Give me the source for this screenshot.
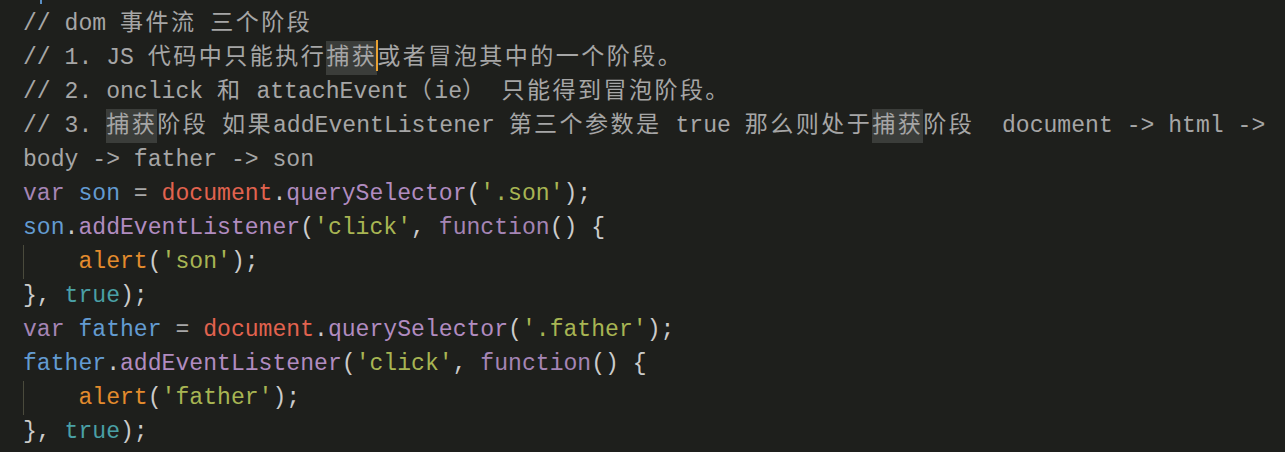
import React from "react";

type Tok = [string, string];

const C = "text-[#a6a6a6]";
const KW = "text-[#a585b5]";
const ID = "text-[#639bd1]";
const P = "text-[#cbcbcb]";
const OP = "text-[#a8a8a8]";
const DOC = "text-[#e2634f]";
const M = "text-[#b18cc0]";
const S = "text-[#a8b553]";
const AL = "text-[#e38b2d]";
const TR = "text-[#4aa0a6]";
const HL = "hl";
const CUR = "cur";

const lines: Tok[][] = [
  [[C, "// dom 事件流 三个阶段"]],
  [[C, "// 1. JS 代码中只能执行"], [HL, "捕获"], [CUR, ""], [C, "或者冒泡其中的一个阶段。"]],
  [[C, "// 2. onclick 和 attachEvent（ie） 只能得到冒泡阶段。"]],
  [
    [C, "// 3. "],
    [HL, "捕获"],
    [C, "阶段 如果addEventListener 第三个参数是 true 那么则处于"],
    [HL, "捕获"],
    [C, "阶段  document -> html ->"],
  ],
  [[C, "body -> father -> son"]],
  [[KW, "var"], [P, " "], [ID, "son"], [OP, " = "], [DOC, "document"], [P, "."], [M, "querySelector"], [P, "("], [S, "'.son'"], [P, ");"]],
  [[ID, "son"], [P, "."], [M, "addEventListener"], [P, "("], [S, "'click'"], [P, ", "], [KW, "function"], [P, "() {"]],
  [[P, "    "], [AL, "alert"], [P, "("], [S, "'son'"], [P, ");"]],
  [[P, "}, "], [TR, "true"], [P, ");"]],
  [[KW, "var"], [P, " "], [ID, "father"], [OP, " = "], [DOC, "document"], [P, "."], [M, "querySelector"], [P, "("], [S, "'.father'"], [P, ");"]],
  [[ID, "father"], [P, "."], [M, "addEventListener"], [P, "("], [S, "'click'"], [P, ", "], [KW, "function"], [P, "() {"]],
  [[P, "    "], [AL, "alert"], [P, "("], [S, "'father'"], [P, ");"]],
  [[P, "}, "], [TR, "true"], [P, ");"]],
];

const CJK = /([\u3000-\u303f\u4e00-\u9fff\uff00-\uffef]+)/;

function Runs({ text }: { text: string }) {
  const parts = text.split(CJK);
  return (
    <>
      {parts.map((p, i) =>
        i % 2 === 1 ? (
          <span key={i} className="tracking-[2.4px]">
            {p}
          </span>
        ) : (
          <span key={i}>{p}</span>
        )
      )}
    </>
  );
}

function Line({ toks, guide }: { toks: Tok[]; guide: boolean }) {
  return (
    <div className="relative h-[34px] leading-[34px] whitespace-pre">
      {guide && <span className="absolute left-0 top-0 h-[34px] w-[1px] bg-[#4a4a3c]" />}
      {toks.map(([cls, text], i) => {
        if (cls === CUR)
          return (
            <span
              key={i}
              className="inline-block w-[2px] h-[31px] -ml-[1px] -mr-[1px] bg-[#e9a132] align-middle relative -top-[2px]"
            />
          );
        if (cls === HL)
          return (
            <span key={i} className="bg-[#3b3d3a] text-[#a6a6a6] py-[4px]">
              <Runs text={text} />
            </span>
          );
        return (
          <span key={i} className={cls}>
            <Runs text={text} />
          </span>
        );
      })}
    </div>
  );
}

export default function App() {
  return (
    <div
      className="w-[1285px] h-[452px] bg-[#1e1f1c] overflow-hidden relative text-[23.1px]"
      style={{ fontFamily: '"Liberation Mono", "Noto Sans CJK SC", monospace' }}
    >
      <span className="absolute left-[40px] top-0 w-[2px] h-[4px] bg-[#5a8fc4]" />
      <div className="pt-[7px] pl-[23px]">
        {lines.map((l, i) => (
          <Line key={i} toks={l} guide={i === 7 || i === 11} />
        ))}
      </div>
    </div>
  );
}
